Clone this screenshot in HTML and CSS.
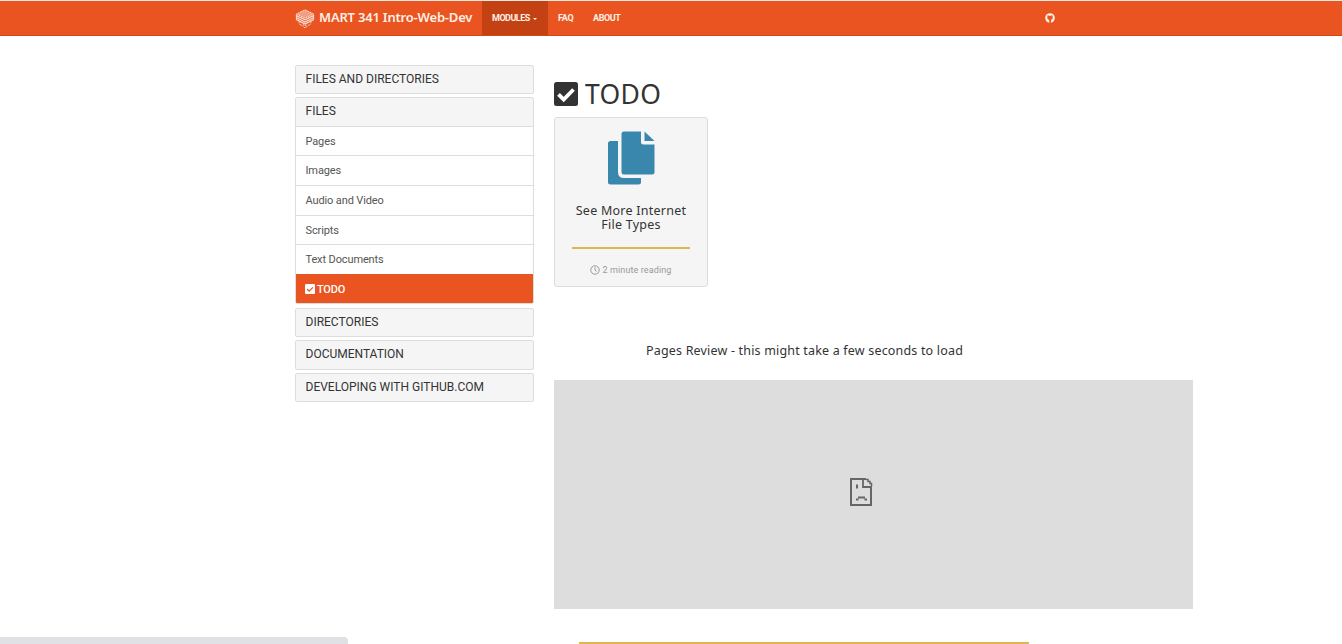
FILE: index.html
```html
<!DOCTYPE html>
<html lang="en">
<head>
<meta charset="utf-8">
<title>MART 341 Intro-Web-Dev</title>
<link rel="stylesheet" href="styles.css">
</head>
<body>
<nav class="navbar">
  <div class="navbar-inner">
    <a class="brand">
      <svg class="brand-logo" viewBox="0 0 20 20" fill="none" stroke="#fff" stroke-width="1">
        <path d="M10 .8 18.5 5 10 9.2 1.5 5Z" fill="#fff" fill-opacity=".55" stroke-dasharray="2 .7"/>
        <path d="M1 6.3 10 10.8 19 6.3M1.2 8.5 10 13 18.8 8.5M2 10.8 10 15 18 10.8" stroke-width="1.3"/>
        <path d="M1.4 5.5v5.8M18.6 5.5v5.8"/>
        <path d="M4 12.5q0 3 2 4M16 12.5q0 3-2 4M5.5 15.3 10 19l4.5-3.7M8 15.5l2 1.5 2-1.5" stroke-dasharray="1.5 .8"/>
      </svg>
      <span class="brand-name">MART 341 Intro-Web-Dev</span>
    </a>
    <a class="nav-link nav-active"><span class="modules">MODULES</span><i class="caret"></i></a>
    <a class="nav-link faq">FAQ</a>
    <a class="nav-link about">ABOUT</a>
    <svg class="github" viewBox="0 0 10 10">
      <circle cx="5" cy="5" r="4.8" fill="#fff0e4"/>
      <path d="M2.6 2.2 4 2.8h2l1.4-.6.2 1.5c.5 1.8-.2 2.8-1.6 3v3H4.2v-3C2.6 6.500 2 5.400 2.400 3.700Z" fill="#e95420"/>
    </svg>
  </div>
</nav>
<div class="layout">
  <aside class="sidebar">
    <section class="panel"><h4 class="panel-title">FILES AND DIRECTORIES</h4></section>
    <section class="panel panel-open">
      <h4 class="panel-title">FILES</h4>
      <ul class="links">
        <li class="link">Pages</li>
        <li class="link">Images</li>
        <li class="link">Audio and Video</li>
        <li class="link">Scripts</li>
        <li class="link">Text Documents</li>
        <li class="link link-active">
          <svg class="check-small" viewBox="0 0 24 24"><rect width="24" height="24" rx="3" fill="#fff"/><path d="m5 12 5 5 9-9" fill="none" stroke="#e95420" stroke-width="3"/></svg>
          <span>TODO</span>
        </li>
      </ul>
    </section>
    <section class="panel"><h4 class="panel-title">DIRECTORIES</h4></section>
    <section class="panel"><h4 class="panel-title">DOCUMENTATION</h4></section>
    <section class="panel"><h4 class="panel-title">DEVELOPING WITH GITHUB.COM</h4></section>
  </aside>
  <main class="content">
    <h1 class="heading">
      <svg class="check-large" viewBox="0 0 24 24"><rect width="24" height="24" rx="2.500" fill="#333"/><path d="m4.500 12.300 5.200 5.200 9.800-10" fill="none" stroke="#fff" stroke-width="3.800"/></svg>
      <span>TODO</span>
    </h1>
    <article class="card">
      <svg class="copy-icon" viewBox="0 0 47 54" fill="#3a87ad">
        <path d="M2 10H10V41Q10 47 16 47H33V51Q33 53.500 30.500 53.500H2.500Q0 53.500 0 51V12.500Q0 10 2.500 10Z"/>
        <path d="M16 .5H33V11Q33 13.500 35.500 13.500H46.500V41Q46.500 43.500 44 43.500H16Q13.500 43.500 13.500 41V3Q13.500 .5 16 .5Z"/>
        <path d="M36.500 .5 46.500 10H36.500Z"/>
      </svg>
      <h5 class="card-title">See More Internet<br>File Types</h5>
      <div class="rule"></div>
      <p class="reading">
        <svg class="clock" viewBox="0 0 10 10" fill="none" stroke="#999"><circle cx="5" cy="5" r="4.200"/><path d="M5 2.300V5.200L6.700 6.300"/></svg>
        <span>2 minute reading</span>
      </p>
    </article>
    <p class="review">Pages Review - this might take a few seconds to load</p>
    <div class="frame">
      <svg class="sad-page" viewBox="0 0 24 30" fill="none" stroke="#666" stroke-width="2">
        <path d="M17 2H2V28H22V9"/>
        <path d="M14 2V10H22" stroke-width="1.800"/>
        <path d="M17 2.500h2v2h2v2h1.500v3" stroke-width="1.500"/>
        <path d="M8 7.500v4"/>
        <path d="M7 22.500h2.500M9 20.500h7M15.500 22.500H18" stroke-width="1.800"/>
      </svg>
    </div>
    <div class="bottom-rule"></div>
  </main>
</div>
<div class="status-bubble"></div>
</body>
</html>
```
FILE: styles.css
```css
* { box-sizing: border-box; }
body { margin: 0; height: 644px; overflow: hidden; background: #fff; color: #333; font-family: Roboto, sans-serif; }
h1, h4, h5, p, ul { margin: 0; padding: 0; font-weight: 400; }
svg { display: block; flex: none; }
.navbar { height: 36px; background: #e95420; border-top: 1px solid #f3e8e4; border-bottom: 1px solid #d34615; }
.navbar-inner { display: flex; align-items: stretch; height: 34px; margin-left: 295px; width: 761px; color: #fff0e4; }
.brand { display: flex; align-items: center; width: 187px; gap: 4px; padding-bottom: 2px; }
.brand-logo { width: 20px; height: 20px; margin-top: 3px; opacity: .8; }
.brand-name { font: 600 13px "Noto Sans", sans-serif; white-space: nowrap; letter-spacing: -.2px; }
.nav-link { display: flex; align-items: center; font-size: 9px; font-weight: 700; white-space: nowrap; letter-spacing: -.4px; }
.nav-active { width: 66px; padding-left: 10px; gap: 3px; background: #c34113; }
.modules { letter-spacing: -.5px; }
.caret { border: 2.500px solid transparent; border-top-color: #fff0e4; border-bottom: 0; margin-top: 2px; }
.faq { padding-left: 10px; width: 35px; letter-spacing: -.3px; }
.about { padding-left: 10px; }
.github { width: 10px; height: 10px; margin: 12px 1px 0 auto; }
.layout { display: flex; gap: 20px; padding: 29px 0 0 295px; }
.sidebar { width: 239px; display: flex; flex-direction: column; gap: 3px; }
.panel { height: 29.400px; border: 1px solid #ddd; border-radius: 2px; background: #f5f5f5; overflow: hidden; }
.panel-open { height: 206.400px; margin-bottom: 1px; }
.panel-title { height: 27.500px; padding-left: 9.500px; font-size: 12px; line-height: 27.600px; white-space: nowrap; }
.links { list-style: none; background: #fff; }
.link { height: 29.550px; padding-left: 9.500px; border-top: 1px solid #ddd; font-size: 11px; line-height: 29px; letter-spacing: -.12px; color: #555; }
.link-active { display: flex; align-items: center; gap: 2px; padding-left: 9px; background: #e95420; border-color: #e95420; color: #fff; font-weight: 500; letter-spacing: -.2px; height: 30px; }
.check-small { width: 10px; height: 10px; }
.content { width: 639px; }
.heading { display: flex; gap: 7px; height: 52px; padding-top: 17px; font: 26.500px/25px "Noto Sans", sans-serif; letter-spacing: .3px; }
.check-large { width: 24px; height: 24px; }
.card { width: 154px; height: 170px; border: 1px solid #ddd; border-radius: 3px; background: #f5f5f5; padding: 13px 17px 0; display: flex; flex-direction: column; align-items: center; }
.copy-icon { width: 47px; height: 54px; }
.card-title { margin-top: 19px; font: 12.500px/14px "Noto Sans", sans-serif; letter-spacing: .25px; text-align: center; white-space: nowrap; }
.rule { width: 118px; height: 2px; margin-top: 15px; background: #dfb64f; }
.reading { display: flex; align-items: center; gap: 2px; margin-top: 15px; font-size: 9px; line-height: 12px; letter-spacing: .12px; color: #999; white-space: nowrap; }
.clock { width: 10px; height: 10px; }
.review { margin: 55px 0 0 92px; font: 12.500px/18px "Noto Sans", sans-serif; letter-spacing: .18px; white-space: nowrap; }
.frame { height: 229px; margin-top: 20px; background: #ddd; display: flex; justify-content: center; padding: 97px 25px 0 0; }
.sad-page { width: 24px; height: 30px; }
.bottom-rule { width: 450px; height: 2px; margin: 33px 0 0 25px; background: #dfb64f; }
.status-bubble { position: absolute; left: 0; bottom: 0; width: 348px; height: 7px; background: #dfe1e5; border-radius: 0 4px 0 0; }
```
